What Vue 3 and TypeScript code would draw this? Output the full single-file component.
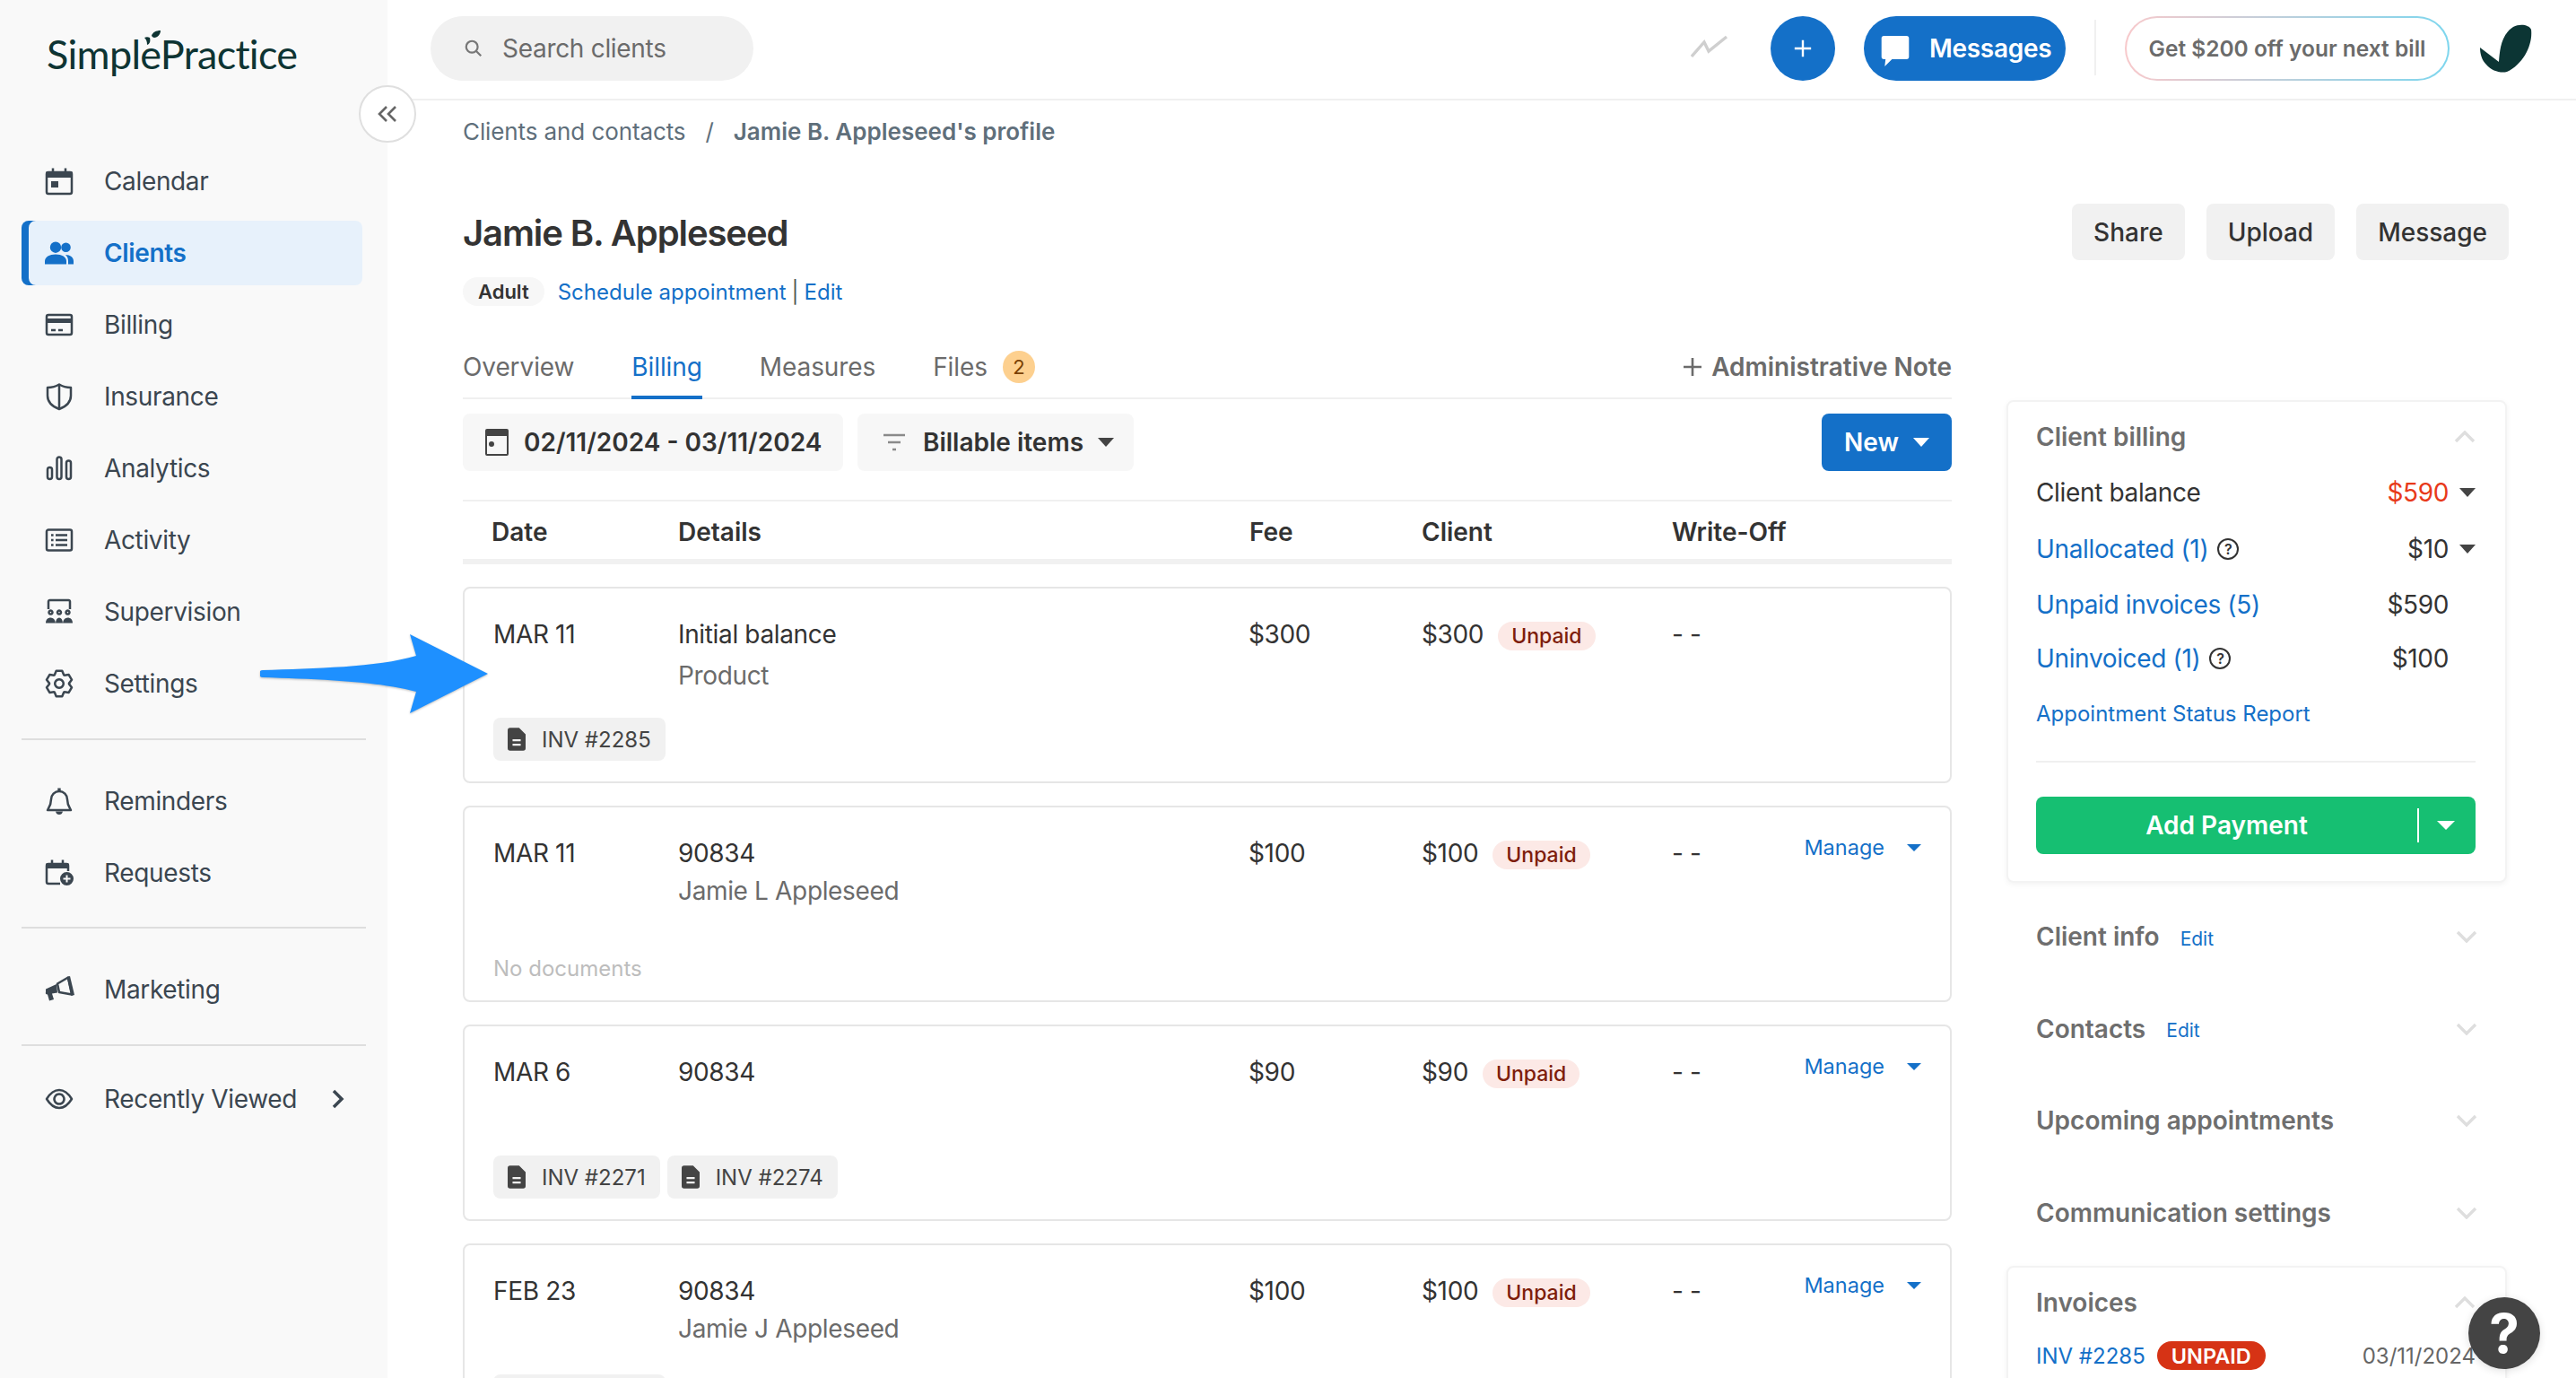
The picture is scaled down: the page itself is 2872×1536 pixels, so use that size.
<script setup lang="ts">
type Seg = { d: string; f?: boolean }
const s = (d: string): Seg => ({ d })
const f = (d: string): Seg => ({ d, f: true })

function gearPath(): string {
  const c = 16
  const pts: string[] = []
  for (let i = 0; i < 6; i++) {
    const a = -90 + 60 * i
    const list: [number, number][] = [[11, a - 28], [14.6, a - 13], [14.6, a + 13], [11, a + 28]]
    for (const [r, deg] of list) {
      const t = (deg * Math.PI) / 180
      pts.push(`${(c + r * Math.cos(t)).toFixed(2)} ${(c + r * Math.sin(t)).toFixed(2)}`)
    }
  }
  return 'M' + pts.join('L') + 'Z'
}

const icons: Record<string, Seg[]> = {
  calendar: [
    s('M4 6h24a2 2 0 0 1 2 2v20a2 2 0 0 1-2 2H4a2 2 0 0 1-2-2V8a2 2 0 0 1 2-2z'),
    f('M3 5h26a2 2 0 0 1 2 2v5H1V7a2 2 0 0 1 2-2z'),
    s('M9 1.5V6M23 1.5V6'),
    f('M7 16h8v7H7z')
  ],
  clients: [
    f('M12 3.5a6.2 6.2 0 1 0 0 12.4 6.2 6.2 0 0 0 0-12.4z'),
    f('M23.5 4.5a5.3 5.3 0 1 0 0 10.6 5.3 5.3 0 0 0 0-10.6z'),
    f('M0 28.5v-3.5c0-4.5 5-7.5 12-7.5s12 3 12 7.5v3.5z'),
    f('M26 28.5h6V25c0-4-3.5-6.8-9-7 2 1.8 3 4 3 7z')
  ],
  billing: [
    s('M4 5h24a2 2 0 0 1 2 2v18a2 2 0 0 1-2 2H4a2 2 0 0 1-2-2V7a2 2 0 0 1 2-2z'),
    f('M2 9h28v5H2z'),
    s('M7 22h5M15 22h5')
  ],
  insurance: [
    s('M16 2.5c4 2.5 8 3.5 13 3.5v9c0 7-5 12-13 15C8 27 3 22 3 15V6c5 0 9-1 13-3.5z'),
    s('M16 3v26')
  ],
  analytics: [
    s('M3 17.5a2.5 2.5 0 0 1 5 0v8a2.5 2.5 0 0 1-5 0z'),
    s('M13.5 6a2.5 2.5 0 0 1 5 0v19.5a2.5 2.5 0 0 1-5 0z'),
    s('M24 10a2.5 2.5 0 0 1 5 0v15.5a2.5 2.5 0 0 1-5 0z')
  ],
  activity: [
    s('M4 4.5h24a2 2 0 0 1 2 2v19a2 2 0 0 1-2 2H4a2 2 0 0 1-2-2v-19a2 2 0 0 1 2-2z'),
    s('M12 10.5h13M12 16h13M12 21.5h13'),
    f('M7 9.2h2.6v2.6H7zM7 14.7h2.6v2.6H7zM7 20.2h2.6v2.6H7z')
  ],
  supervision: [
    s('M4 13V4.5A1.5 1.5 0 0 1 5.5 3h21A1.5 1.5 0 0 1 28 4.5V13'),
    s('M6.5 14.6a2 2 0 1 0 .01 0zM16 14.6a2 2 0 1 0 .01 0zM25.5 14.6a2 2 0 1 0 .01 0z'),
    f('M1 28.5c0-4 2.5-6 5.500-6s5 2 5.500 6zM12 28.5c.3-4 1.800-6 4-6s3.700 2 4 6zM20 28.5c.5-4 2.500-6 5.500-6s5.500 2 5.500 6z')
  ],
  settings: [s(gearPath()), s('M16 11.3a4.7 4.7 0 1 0 .01 0z')],
  reminders: [
    s('M16 5a9 9 0 0 0-9 9c0 6-2 8.5-4 12h26c-2-3.5-4-6-4-12a9 9 0 0 0-9-9z'),
    f('M14.3 1.5h3.4V5h-3.4zM12 27.5h8c-.5 2.5-2 3.5-4 3.5s-3.5-1-4-3.5z')
  ],
  requests: [
    s('M17 28H4a2 2 0 0 1-2-2V8a2 2 0 0 1 2-2h20a2 2 0 0 1 2 2v6'),
    f('M3 5h22a2 2 0 0 1 2 2v4H1V7a2 2 0 0 1 2-2z'),
    s('M8 1.5V6M20 1.5V6'),
    f('M24.5 15a7.5 7.5 0 1 0 0 15 7.500 7.500 0 0 0 0-15zm-1 3.5h2v3h3v2h-3v3h-2v-3h-3v-2h3z')
  ],
  marketing: [
    f('M1 15.5l12-5.5 1 9.500-6 1 2 6.500-5 1.500-2-7c-2 0-2.500-1-2-2.500z'),
    s('M14 9.500L26 2.500l4 19-14-2.500z'),
    f('M24.500 2l3.500-1 5 21-3.500 1z')
  ],
  eye: [
    s('M2 16c4-6.500 9-10 14-10s10 3.500 14 10c-4 6.500-9 10-14 10S6 22.500 2 16z'),
    s('M16 10.500a5.500 5.500 0 1 0 .01 0z')
  ]
}

const navGroups = [
  [
    { id: 'calendar', label: 'Calendar' },
    { id: 'clients', label: 'Clients', active: true },
    { id: 'billing', label: 'Billing' },
    { id: 'insurance', label: 'Insurance' },
    { id: 'analytics', label: 'Analytics' },
    { id: 'activity', label: 'Activity' },
    { id: 'supervision', label: 'Supervision' },
    { id: 'settings', label: 'Settings' }
  ],
  [
    { id: 'reminders', label: 'Reminders' },
    { id: 'requests', label: 'Requests' }
  ],
  [{ id: 'marketing', label: 'Marketing' }],
  [{ id: 'eye', label: 'Recently Viewed', more: true }]
]

const tabs = ['Overview', 'Billing', 'Measures', 'Files']

const rows = [
  { date: 'MAR 11', title: 'Initial balance', sub: 'Product', fee: '$300', client: '$300', docs: ['INV #2285'], manage: false, wide: true },
  { date: 'MAR 11', title: '90834', sub: 'Jamie L Appleseed', fee: '$100', client: '$100', docs: [], manage: true },
  { date: 'MAR 6', title: '90834', sub: '', fee: '$90', client: '$90', docs: ['INV #2271', 'INV #2274'], manage: true },
  { date: 'FEB 23', title: '90834', sub: 'Jamie J Appleseed', fee: '$100', client: '$100', docs: ['INV #2260'], manage: true }
]

const collapsed = [
  { title: 'Client info', edit: true },
  { title: 'Contacts', edit: true },
  { title: 'Upcoming appointments', edit: false },
  { title: 'Communication settings', edit: false }
]
</script>

<template>
  <div class="app">
    <aside class="sidebar">
      <div class="logo">
        <span class="logo-text">SimplePractice</span>
        <svg class="logo-leaf" viewBox="0 0 20 18"><path d="M1 9c2 2 3 4 3 8 3-1 4-4 3-8C5 8 3 8 1 9zM9 7c1-4 5-6 10-6 0 4-3 8-7 8-1 0-2-1-3-2z" fill="#0e3433" /></svg>
      </div>
      <nav class="nav">
        <div v-for="(group, gi) in navGroups" :key="gi" class="nav-group" :class="'group-' + gi">
          <a v-for="item in group" :key="item.id" class="nav-item" :class="{ active: item.active }">
            <svg class="nav-icon" viewBox="0 0 32 32">
              <path v-for="(seg, i) in icons[item.id]" :key="i" :d="seg.d" :class="seg.f ? 'fill' : 'line'" />
            </svg>
            <span class="nav-label">{{ item.label }}</span>
            <svg v-if="item.more" class="nav-more" viewBox="0 0 14 22"><path d="M2 2l9 9-9 9" /></svg>
          </a>
        </div>
      </nav>
      <button class="collapse" type="button" aria-label="Collapse">
        <svg viewBox="0 0 24 20"><path d="M11 2L3 10l8 8M21 2l-8 8 8 8" /></svg>
      </button>
    </aside>

    <div class="main">
      <header class="topbar">
        <div class="search">
          <svg class="search-icon" viewBox="0 0 24 24"><circle cx="10" cy="10" r="7" /><path d="M15 15l6 6" /></svg>
          <span>Search clients</span>
        </div>
        <div class="top-actions">
          <svg class="trend" viewBox="0 0 42 26"><path d="M1 24L15 8l5 10L40 2" /></svg>
          <button class="round-plus" type="button" aria-label="Add">
            <svg viewBox="0 0 24 24"><path d="M12 2v20M2 12h20" /></svg>
          </button>
          <button class="messages" type="button">
            <svg viewBox="0 0 36 40"><path d="M4 1h28a3 3 0 0 1 3 3v23a3 3 0 0 1-3 3H14l-9 9 1-9H4a3 3 0 0 1-3-3V4a3 3 0 0 1 3-3z" /></svg>
            <span>Messages</span>
          </button>
          <span class="top-sep"></span>
          <button class="promo" type="button">Get $200 off your next bill</button>
          <svg class="mark" viewBox="0 0 60 54"><path d="M1 26L22 42C23 30 24 12 38 3C46-1 56 1 58 6C60 22 50 44 31 53C24 55 14 52 8 45C3 40 1 33 1 26Z" /></svg>
        </div>
      </header>

      <div class="page">
        <div class="crumbs">
          <span>Clients and contacts</span>
          <span class="crumb-sep">/</span>
          <strong>Jamie B. Appleseed's profile</strong>
        </div>

        <div class="title-row">
          <h1>Jamie B. Appleseed</h1>
          <div class="title-actions">
            <button type="button">Share</button>
            <button type="button">Upload</button>
            <button type="button">Message</button>
          </div>
        </div>

        <div class="meta">
          <span class="pill">Adult</span>
          <a class="link">Schedule appointment</a>
          <span class="meta-bar">|</span>
          <a class="link">Edit</a>
        </div>

        <div class="columns">
          <section class="left">
            <div class="tabs">
              <a v-for="tab in tabs" :key="tab" class="tab" :class="{ current: tab === 'Billing' }">
                {{ tab }}
                <span v-if="tab === 'Files'" class="count">2</span>
              </a>
              <a class="admin-note">
                <svg viewBox="0 0 24 24"><path d="M12 2v20M2 12h20" /></svg>
                Administrative Note
              </a>
            </div>

            <div class="toolbar">
              <button class="tool date" type="button">
                <svg viewBox="0 0 28 32"><path d="M3 1h22a2 2 0 0 1 2 2v26a2 2 0 0 1-2 2H3a2 2 0 0 1-2-2V3a2 2 0 0 1 2-2zm0 8v20h22V9zm5 6a3 3 0 1 1 0 6 3 3 0 0 1 0-6z" /></svg>
                02/11/2024 - 03/11/2024
              </button>
              <button class="tool filter" type="button">
                <svg viewBox="0 0 26 20"><path d="M1 2h24M6 10h14M11 18h4" /></svg>
                Billable items
                <i class="caret dark"></i>
              </button>
              <button class="new" type="button">New<i class="caret white"></i></button>
            </div>

            <div class="thead">
              <span>Date</span><span>Details</span><span>Fee</span><span>Client</span><span>Write-Off</span>
            </div>

            <article v-for="(row, ri) in rows" :key="ri" class="card">
              <div class="card-grid">
                <span class="cell">{{ row.date }}</span>
                <div class="cell">
                  <div>{{ row.title }}</div>
                  <div class="sub" :class="{ wide: row.wide }">{{ row.sub }}</div>
                </div>
                <span class="cell">{{ row.fee }}</span>
                <span class="cell client">{{ row.client }}<em class="unpaid">Unpaid</em></span>
                <span class="cell">- -</span>
                <a v-if="row.manage" class="manage">Manage<i class="caret blue"></i></a>
              </div>
              <div v-if="row.docs.length" class="docs">
                <span v-for="doc in row.docs" :key="doc" class="doc">
                  <svg viewBox="0 0 22 28"><path d="M3 0h11l8 8v17a3 3 0 0 1-3 3H3a3 3 0 0 1-3-3V3a3 3 0 0 1 3-3zm3 14v2.5h10V14zm0 5.5V22h10v-2.5z" /></svg>
                  {{ doc }}
                </span>
              </div>
              <div v-else class="no-docs">No documents</div>
            </article>
          </section>

          <aside class="right">
            <section class="panel billing">
              <div class="panel-head">
                <h2>Client billing</h2>
                <svg class="chev" viewBox="0 0 24 14"><path d="M2 12L12 2l10 10" /></svg>
              </div>
              <div class="line r1"><span>Client balance</span><span class="val"><b class="red">$590</b><i class="caret dark"></i></span></div>
              <div class="line r2"><span class="q"><a class="link">Unallocated (1)</a><i class="help">?</i></span><span class="val"><b>$10</b><i class="caret dark"></i></span></div>
              <div class="line r3"><a class="link">Unpaid invoices (5)</a><span class="val"><b>$590</b><i class="caret none"></i></span></div>
              <div class="line r4"><span class="q"><a class="link">Uninvoiced (1)</a><i class="help">?</i></span><span class="val"><b>$100</b><i class="caret none"></i></span></div>
              <div class="line r5"><a class="link small">Appointment Status Report</a></div>
              <hr />
              <button class="pay" type="button">
                <span class="pay-label">Add Payment</span>
                <span class="pay-sep"></span>
                <i class="caret white"></i>
              </button>
            </section>

            <div v-for="c in collapsed" :key="c.title" class="fold">
              <h2>{{ c.title }}</h2>
              <a v-if="c.edit" class="link edit">Edit</a>
              <svg class="chev" viewBox="0 0 24 14"><path d="M2 2l10 10L22 2" /></svg>
            </div>

            <section class="panel invoices">
              <div class="panel-head">
                <h2>Invoices</h2>
                <svg class="chev" viewBox="0 0 24 14"><path d="M2 12L12 2l10 10" /></svg>
              </div>
              <div class="inv">
                <a class="link">INV #2285</a>
                <span class="status">UNPAID</span>
                <span class="inv-date">03/11/2024</span>
              </div>
            </section>
          </aside>
        </div>
      </div>
    </div>

    <svg class="arrow" viewBox="0 0 260 92">
      <path d="M3 40C60 38 130 37 174 24L167 0 254 44 167 88 174 64C130 52 60 50 3 48a4 4 0 0 1 0-8z" />
    </svg>

    <button class="help-fab" type="button">?</button>
  </div>
</template>

<style>
html, body { margin: 0; background: #fff; }
</style>

<style scoped>
.app {
  position: relative;
  display: flex;
  width: 2872px;
  height: 1536px;
  overflow: hidden;
  background: #fff;
  font-family: Inter, "Liberation Sans", sans-serif;
  color: #333;
  font-size: 28px;
}
button { font-family: inherit; border: 0; cursor: pointer; }
h1, h2 { margin: 0; }
a { cursor: pointer; }
i, em { font-style: normal; }

/* sidebar */
.sidebar {
  position: relative;
  flex: 0 0 432px;
  background: #f9f9f9;
}
.logo { position: relative; height: 166px; box-sizing: border-box; padding: 30px 0 0 52px; }
.logo-text {
  font-family: Lato, "Open Sans", sans-serif;
  font-size: 45px;
  line-height: 60px;
  letter-spacing: -0.7px;
  color: #0e3433;
}
.logo-leaf { position: absolute; left: 160px; top: 33px; width: 20px; height: 18px; }
.nav-group { margin-left: 24px; width: 384px; }
.group-0, .group-1, .group-2 { border-bottom: 2px solid #dedede; }
.group-0 { padding-bottom: 25px; }
.group-1 { padding: 32px 0 24px; }
.group-2 { padding: 32px 0 25px; }
.group-3 { padding-top: 23px; }
.nav-item {
  display: flex;
  align-items: center;
  box-sizing: border-box;
  width: 380px;
  height: 72px;
  margin-bottom: 8px;
  padding: 0 20px 0 26px;
  gap: 34px;
  border-radius: 8px;
  color: #3b4650;
  font-size: 28px;
  letter-spacing: -0.35px;
}
.nav-label { white-space: nowrap; }
.nav-group .nav-item:last-child { margin-bottom: 0; }
.nav-item.active {
  background: #e7f1fb;
  box-shadow: inset 8px 0 0 #1470c8;
  color: #1470c8;
  font-weight: 600;
}
.nav-icon { flex: none; width: 32px; height: 32px; overflow: visible; }
.nav-icon .line { fill: none; stroke: currentColor; stroke-width: 2.5; stroke-linejoin: round; }
.nav-icon .fill { fill: currentColor; }
.nav-more { flex: none; width: 14px; height: 22px; margin-left: auto; fill: none; stroke: #3b4650; stroke-width: 3.5; }
.collapse {
  position: absolute;
  left: 400px;
  top: 95px;
  z-index: 3;
  display: flex;
  align-items: center;
  justify-content: center;
  width: 64px;
  height: 64px;
  padding: 0;
  box-sizing: border-box;
  border: 2px solid #dfdfdf;
  border-radius: 50%;
  background: #fff;
}
.collapse svg { width: 24px; height: 20px; fill: none; stroke: #666; stroke-width: 2.6; }

/* top */
.main { flex: 1; min-width: 0; display: flex; flex-direction: column; }
.topbar {
  flex: none;
  display: flex;
  align-items: flex-start;
  justify-content: space-between;
  box-sizing: border-box;
  height: 112px;
  padding: 18px 48px 0 48px;
  border-bottom: 2px solid #f0f0f0;
}
.search {
  display: flex;
  align-items: center;
  box-sizing: border-box;
  width: 360px;
  height: 72px;
  padding-left: 37px;
  gap: 21px;
  border-radius: 36px;
  background: #f1f1f1;
  color: #6b6b6b;
  font-size: 28px;
  letter-spacing: -0.3px;
}
.search-icon { width: 22px; height: 22px; fill: none; stroke: #777; stroke-width: 2.4; }
.top-actions { display: flex; align-items: flex-start; }
.trend { width: 42px; height: 26px; margin: 21px 47px 0 0; fill: none; stroke: #cfcfcf; stroke-width: 3.4; }
.round-plus {
  display: flex;
  align-items: center;
  justify-content: center;
  width: 72px;
  height: 72px;
  padding: 0;
  border-radius: 50%;
  background: #1470c8;
}
.round-plus svg { width: 22px; height: 22px; fill: none; stroke: #fff; stroke-width: 2.6; }
.messages {
  display: flex;
  align-items: center;
  gap: 20px;
  box-sizing: border-box;
  width: 225px;
  height: 72px;
  margin-left: 32px;
  padding: 0 0 0 17px;
  border-radius: 36px;
  background: #1470c8;
  color: #fff;
  font-size: 28px;
  font-weight: 600;
  letter-spacing: -0.3px;
}
.messages svg { width: 36px; height: 36px; margin-top: 6px; fill: #fff; }
.top-sep { width: 2px; height: 62px; margin: 4px 32px 0; background: #f0f0f0; }
.promo {
  box-sizing: border-box;
  width: 362px;
  height: 72px;
  padding: 0;
  border: 2px solid transparent;
  border-radius: 36px;
  background: linear-gradient(#fff, #fff) padding-box, linear-gradient(90deg, #f8c9cb, #7dd6ee) border-box;
  color: #6b6b6b;
  font-size: 24.5px;
  font-weight: 600;
}
.mark { width: 60px; height: 54px; margin: 9px 0 0 33px; fill: #0c3534; }

/* page */
.page { padding: 16px 77px 0 84px; }
.crumbs { display: flex; align-items: center; height: 36px; font-size: 26px; letter-spacing: -0.1px; color: #5f6f7b; }
.crumbs strong { font-weight: 600; letter-spacing: 0; }
.crumb-sep { margin: 0 22px; }
.title-row { display: flex; justify-content: space-between; align-items: flex-start; margin-top: 62px; height: 68px; }
h1 { font-size: 40px; line-height: 68px; font-weight: 600; letter-spacing: -1.1px; color: #333; }
.title-actions { display: flex; gap: 24px; margin-right: -2px; padding-top: 1px; }
.title-actions button {
  height: 63px;
  padding: 0 24px;
  border-radius: 8px;
  background: #f1f1f1;
  color: #333;
  font-size: 28px;
  font-weight: 500;
}
.meta { display: flex; align-items: center; height: 32px; margin-top: 15px; font-size: 24px; }
.pill {
  display: flex;
  align-items: center;
  height: 32px;
  padding: 0 17px;
  margin-right: 15px;
  border-radius: 16px;
  background: #f7f7f7;
  font-size: 22px;
  font-weight: 600;
  color: #333;
}
.link { color: #1470c8; }
.meta-bar { margin: 0 6px; color: #555; }

.columns { display: flex; align-items: flex-start; gap: 61px; }
.left { flex: 0 0 1660px; }
.right { flex: 0 0 558px; margin-top: 105px; }

/* tabs */
.tabs {
  display: flex;
  align-items: flex-start;
  gap: 64px;
  box-sizing: border-box;
  height: 54px;
  margin-top: 50px;
  border-bottom: 2px solid #f0f0f0;
}
.tab {
  display: flex;
  align-items: center;
  gap: 17px;
  box-sizing: border-box;
  height: 54px;
  padding-bottom: 18px;
  color: #6b6b6b;
  font-size: 28px;
  letter-spacing: -0.1px;
}
.tab.current { color: #1470c8; border-bottom: 4px solid #1470c8; padding-bottom: 14px; }
.count {
  display: flex;
  align-items: center;
  justify-content: center;
  width: 36px;
  height: 36px;
  border-radius: 50%;
  background: #fdd08f;
  color: #7a4100;
  font-size: 22px;
}
.admin-note {
  display: flex;
  align-items: center;
  gap: 9px;
  height: 36px;
  margin-left: auto;
  color: #6b6b6b;
  font-size: 28px;
  font-weight: 600;
}
.admin-note svg { width: 24px; height: 24px; fill: none; stroke: #6b6b6b; stroke-width: 2.6; }

/* toolbar */
.toolbar { display: flex; align-items: center; gap: 16px; margin-top: 16px; }
.tool {
  display: flex;
  align-items: center;
  height: 64px;
  border-radius: 8px;
  background: #f7f7f7;
  color: #333;
  font-size: 28px;
  font-weight: 600;
}
.date { gap: 16px; width: 424px; padding: 0 0 0 24px; }
.date svg { width: 28px; height: 32px; fill: #444; }
.filter { width: 308px; padding: 0 0 0 28px; }
.filter svg { width: 26px; height: 20px; margin-right: 19px; fill: none; stroke: #8a8a8a; stroke-width: 2.4; }
.filter .caret { margin-left: 16px; }
.new {
  display: flex;
  align-items: center;
  justify-content: center;
  gap: 16px;
  width: 145px;
  height: 64px;
  margin-left: auto;
  padding: 0;
  border-radius: 8px;
  background: #1470c8;
  color: #fff;
  font-size: 28px;
  font-weight: 600;
}
.caret {
  display: inline-block;
  width: 0;
  height: 0;
  border-left: 9px solid transparent;
  border-right: 9px solid transparent;
  border-top: 10px solid #444;
}
.caret.white { border-top-color: #fff; }
.caret.blue { border-left-width: 8px; border-right-width: 8px; border-top: 8px solid #1470c8; }
.caret.none { border-top-color: transparent; }

/* table */
.thead {
  display: grid;
  grid-template-columns: 208px 637px 192px 279px 1fr;
  box-sizing: border-box;
  height: 72px;
  margin-top: 32px;
  padding: 16px 0 0 32px;
  border-top: 2px solid #f0f0f0;
  border-bottom: 6px solid #f1f1f1;
  color: #333;
  font-weight: 600;
  font-size: 28px;
  line-height: 36px;
}
.card {
  display: flex;
  flex-direction: column;
  box-sizing: border-box;
  height: 219px;
  margin-top: 25px;
  padding: 33px 32px 23px;
  border: 2px solid #e6e6e6;
  border-radius: 8px;
  background: #fff;
}
.card-grid {
  display: grid;
  grid-template-columns: 206px 636px 193px 279px 1fr auto;
  align-items: start;
  color: #333;
  font-size: 28px;
  line-height: 36px;
  letter-spacing: -0.35px;
}
.sub { margin-top: 6px; color: #6b6b6b; }
.sub.wide { margin-top: 10px; }
.client { display: flex; align-items: center; }
.unpaid {
  display: inline-flex;
  align-items: center;
  height: 32px;
  margin-left: 16px;
  padding: 0 15px;
  border-radius: 16px;
  background: #fce9e6;
  color: #7e1d0b;
  font-size: 23px;
  font-weight: 500;
  letter-spacing: 0;
  transform: translateY(2px);
}
.manage {
  display: flex;
  align-items: center;
  gap: 25px;
  color: #1470c8;
  font-size: 23.5px;
  line-height: 24px;
  letter-spacing: 0;
}
.docs { display: flex; gap: 8px; margin-top: auto; }
.doc {
  display: flex;
  align-items: center;
  gap: 18px;
  height: 48px;
  padding: 0 16px 0 16px;
  border-radius: 8px;
  background: #f1f1f1;
  color: #444;
  font-size: 24px;
}
.doc svg { width: 20px; height: 26px; fill: #444; }
.no-docs { margin-top: auto; margin-bottom: -3px; color: #bdbdbd; font-size: 24px; line-height: 30px; }

/* right */
.panel {
  box-sizing: border-box;
  border: 2px solid #f3f3f3;
  border-radius: 8px;
  background: #fff;
  box-shadow: 0 2px 6px rgba(0, 0, 0, 0.05);
  padding: 19px 33px 0 31px;
}
.billing { height: 538px; }
.panel-head { display: flex; justify-content: space-between; align-items: center; height: 40px; }
h2 { color: #6e6e6e; font-size: 28px; font-weight: 600; }
.chev { flex: none; width: 24px; height: 14px; fill: none; stroke: #dedede; stroke-width: 3.4; }
.line { display: flex; justify-content: space-between; align-items: center; height: 40px; font-size: 28px; letter-spacing: -0.35px; }
.r1 { margin-top: 22px; }
.r2 { margin-top: 23px; }
.r3 { margin-top: 22px; }
.r4 { margin-top: 20px; }
.r5 { margin-top: 21px; letter-spacing: 0; }
.val { display: flex; align-items: center; gap: 12px; }
.val b { font-weight: 400; }
.val .red { color: #e8391a; }
.q { display: flex; align-items: center; gap: 10px; }
.help {
  display: flex;
  align-items: center;
  justify-content: center;
  box-sizing: border-box;
  width: 24px;
  height: 24px;
  border: 2px solid #333;
  border-radius: 50%;
  color: #333;
  font-size: 16px;
  font-weight: 600;
}
.small { font-size: 24px; }
.panel hr { height: 2px; margin: 33px 0 0; border: 0; background: #f0f0f0; }
.pay {
  position: relative;
  display: flex;
  align-items: center;
  width: 490px;
  height: 64px;
  margin-top: 38px;
  padding: 0;
  border-radius: 8px;
  background: #16bf72;
  color: #fff;
  font-size: 28px;
  font-weight: 600;
}
.pay-label { flex: 0 0 425px; text-align: center; }
.pay-sep { width: 2px; height: 38px; background: #fff; }
.pay .caret { margin-left: 20px; border-left-width: 10px; border-right-width: 10px; }
.fold {
  display: flex;
  align-items: center;
  box-sizing: border-box;
  height: 102.6px;
  padding: 0 33px;
}
.billing + .fold { margin-top: 9px; }
.fold .chev { margin-left: auto; }
.edit { margin-left: 23px; padding-top: 4px; font-size: 21px; }
.invoices { height: 200px; margin-top: 8px; }
.inv { display: flex; align-items: center; height: 36px; margin-top: 21px; font-size: 24px; }
.status {
  display: flex;
  align-items: center;
  height: 32px;
  margin-left: 13px;
  padding: 0 16px;
  border-radius: 16px;
  background: #d63315;
  color: #fff;
  font-size: 23.5px;
  font-weight: 600;
}
.inv-date { margin-left: auto; color: #666; }

/* overlays */
.arrow {
  position: absolute;
  left: 290px;
  top: 707px;
  width: 260px;
  height: 92px;
  fill: #1e90ff;
  filter: drop-shadow(0 1px 1px rgba(0, 0, 0, 0.25));
}
.help-fab {
  position: absolute;
  left: 2752px;
  top: 1446px;
  width: 80px;
  height: 80px;
  padding: 0;
  border-radius: 50%;
  background: #444;
  color: #fff;
  font-size: 60px;
  font-weight: 700;
  line-height: 80px;
  box-shadow: 0 2px 10px rgba(0, 0, 0, 0.12);
}
</style>
